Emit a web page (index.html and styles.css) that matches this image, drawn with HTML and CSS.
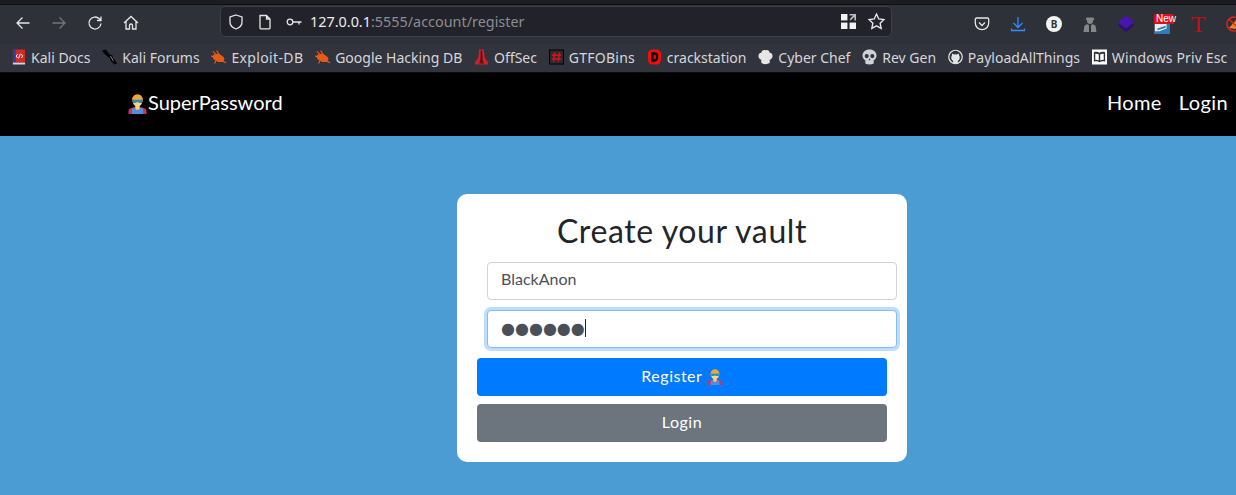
FILE: index.html
```html
<!DOCTYPE html>
<html lang="en">
<head>
<meta charset="utf-8">
<title>SuperPassword</title>
<link rel="stylesheet" href="styles.css">
</head>
<body>
<svg class="defs" width="0" height="0" aria-hidden="true">
  <symbol id="hero" viewBox="0 0 20 20">
    <path d="M1 20v-2.500c0-2 1.600-3.200 3.500-3.700l3-.8h5l3 .8c1.900.5 3.500 1.700 3.500 3.700V20z" fill="#d62f52"/>
    <path d="M4.500 14.800l2.500-1c.8 1.600 1.800 2.400 3 2.400s2.200-.8 3-2.400l2.500 1V20h-11z" fill="#4f8fe0"/>
    <path d="M7.800 11h4.400v3c0 1.100-.9 2-2.200 2s-2.200-.9-2.200-2z" fill="#fbd07a"/>
    <circle cx="10" cy="7.500" r="4.800" fill="#fdd583"/>
    <path d="M4.500 8C3.800 3.400 6.600.3 10 .3s6.200 3.100 5.500 7.700l-.9-2.700H5.400z" fill="#f7a427"/>
    <path d="M5.200 5.600h9.600v2.300c0 .6-.5 1-1 1h-1.700L10 8l-2.100.9H6.200c-.5 0-1-.4-1-1z" fill="#2d8ab5"/>
  </symbol>
</svg>

<header class="browser">
  <div class="strip"></div>
  <div class="toolbar">
    <div class="nav-buttons">
      <svg class="tool" viewBox="0 0 16 16"><path d="M14.500 8H2M7.500 2.500L2 8l5.500 5.500"/></svg>
      <svg class="tool dim" viewBox="0 0 16 16"><path d="M1.500 8H14M8.500 2.500L14 8l-5.500 5.500"/></svg>
      <svg class="tool" viewBox="0 0 16 16"><path d="M14 8.500A6 6 0 1 1 12.300 3.800L14 5.500M14 1.500v4h-4"/></svg>
      <svg class="tool" viewBox="0 0 16 16"><path d="M1 8l7-6.500L15 8M3 6.500V14h3.500v-3.500a1.500 1.500 0 0 1 3 0V14H13V6.500"/></svg>
    </div>
    <div class="urlbar">
      <svg class="tool" viewBox="0 0 16 16"><path d="M8 1l6 2v5c0 3.500-2.500 5.800-6 7-3.500-1.200-6-3.500-6-7V3z"/></svg>
      <svg class="tool" viewBox="0 0 16 16"><path d="M3 1.500h6.500L13 5v9a.8.8 0 0 1-.8.8H3.800A.8.8 0 0 1 3 14zM9.500 1.500V5H13"/></svg>
      <svg class="tool" viewBox="0 0 16 16"><circle cx="4" cy="8" r="2.800"/><path d="M7 8h8.500M13 8v2.500"/></svg>
      <span class="url"><span class="host">127.0.0.1</span>:5555/account/register</span>
      <span class="url-actions">
        <svg class="qr" viewBox="0 0 14 14"><rect x="0" y="0" width="6" height="6"/><rect x="0" y="8" width="6" height="6"/><rect x="8" y="8" width="6" height="6"/><path d="M8 0h6v6h-1.500V2.600L9 6 8 5l3.400-3.500H8z" opacity=".75"/></svg>
        <svg class="tool star" viewBox="0 0 16 16"><path d="M8 1l2.100 4.600 4.900.6-3.600 3.400 1 4.900L8 12.100 3.600 14.500l1-4.900L1 6.200l4.900-.6z"/></svg>
      </span>
    </div>
    <div class="extensions">
      <svg class="tool ext" viewBox="0 0 16 16"><path d="M2.500 2h11c.7 0 1.200.5 1.200 1.200V7A6.700 6.700 0 0 1 1.300 7V3.200C1.300 2.500 1.800 2 2.500 2z"/><path d="M5 6.500l3 3 3-3"/></svg>
      <svg class="tool ext download" viewBox="0 0 16 16"><path d="M8 1v10M3.500 7L8 11.500 12.500 7M1.500 12.500v2h13v-2"/></svg>
      <span class="ext badge-b">B</span>
      <svg class="ext" viewBox="0 0 16 16"><circle cx="8" cy="5" r="3" fill="#85868a"/><path d="M4.500 1.500h7l.8 2.500H3.700z" fill="#85868a"/><path d="M1.500 16l.8-5.500C2.500 9 4 8.500 6 8.200l1 1.300v6.500zM14.500 16l-.8-5.500C13.500 9 12 8.500 10 8.200L9 9.500V16z" fill="#85868a"/></svg>
      <svg class="ext" viewBox="0 0 16 16"><path d="M8 0l8 6-8 6-8-6z" fill="#4a12b8"/><path d="M1.500 8L8 13l6.500-5L16 9.500 8 16 0 9.500z" fill="#2d0d78"/></svg>
      <span class="ext new-ext">
        <span class="new-tag">New</span><svg class="new-icon" viewBox="0 0 16 11"><rect width="16" height="11" fill="#e8eef2"/><path d="M0 8h5l8-3V0h3v11H0z" fill="#2f7cb8"/><path d="M3 5l9-3v2L3 7z" fill="#2f7cb8"/></svg>
      </span>
      <span class="ext letter-t">T</span>
      <svg class="ext" viewBox="0 0 16 16"><circle cx="8" cy="8" r="7" fill="#3a2a2a" stroke="#d8281e" stroke-width="1.500"/><path d="M3 12l7-8 4 4-5 5z" fill="#e08a2c"/><path d="M3 3l10 10" stroke="#d8281e" stroke-width="1.500"/></svg>
    </div>
  </div>
  <nav class="bookmarks">
    <a class="bm"><svg viewBox="0 0 16 16"><rect x="2" y="0" width="13" height="14" fill="#d22b26"/><rect x="2" y="0" width="3" height="14" fill="#2a3f9a"/><rect x="2" y="14" width="13" height="2" fill="#d6d6d6"/><path d="M7 5L5.500 7 7 9M11 5l1.500 2L11 9M8 9.500L10 4.500" stroke="#fff" fill="none"/></svg>Kali Docs</a>
    <a class="bm"><svg viewBox="0 0 16 16"><path d="M0 1l4-1 4 5 3 1 1 3 3 4 1 2-3 1-3-3-2-4-3-2-3-3z" fill="#050505"/><path d="M9 7l3 5" stroke="#ccc" stroke-width=".7"/></svg>Kali Forums</a>
    <a class="bm wide-a"><svg viewBox="0 0 16 16"><ellipse cx="8" cy="9" rx="6.500" ry="4" transform="rotate(20 8 9)" fill="#ea5a17"/><path d="M2 2l5 5M6 1l3 5M0 7l4 1M11 12l5 2M5 12l-1 3" stroke="#ea5a17" stroke-width="1.200"/></svg>Exploit-DB</a>
    <a class="bm"><svg viewBox="0 0 16 16"><ellipse cx="8" cy="9" rx="6.500" ry="4" transform="rotate(20 8 9)" fill="#ea5a17"/><path d="M2 2l5 5M6 1l3 5M0 7l4 1M11 12l5 2M5 12l-1 3" stroke="#ea5a17" stroke-width="1.200"/></svg>Google Hacking DB</a>
    <a class="bm"><svg viewBox="0 0 16 16"><path d="M5.500 0h5l1 9 3.500 4.500V16H1v-2.500L4.500 9z" fill="#cf2027"/><path d="M7.200 1h1.600l.4 10 1.300 4H5.500l1.300-4z" fill="#5a1214"/></svg>OffSec</a>
    <a class="bm wide-b"><svg viewBox="0 0 16 16"><rect x=".5" y=".5" width="15" height="15" fill="#2a2b30" stroke="#000"/><path d="M6 3L5 13M11 3l-1 10M3 6h10M3 10h10" stroke="#c4161c" stroke-width="1.800"/></svg>GTFOBins</a>
    <a class="bm"><svg viewBox="0 0 16 16"><rect x="1" y="0" width="14" height="16" rx="5" fill="#f00d0d"/><path d="M4.500 3h3.500c3 0 4 2.200 4 5s-1 5-4 5H4.500z" fill="#000"/><path d="M7 5.500h1c1.300 0 1.500 1.200 1.500 2.500s-.2 2.500-1.500 2.500H7z" fill="#f00d0d"/></svg>crackstation</a>
    <a class="bm"><svg viewBox="0 0 16 16"><path d="M3.500 11C-.5 10-.5 3.500 3.500 3.500 4 .5 7 0 8 1c2-1 4 0 4.500 2.500 4 0 4 6.500 0 7.500v3.500c-3 1.500-6 1.500-9 0z" fill="#e6e6e6"/></svg>Cyber Chef</a>
    <a class="bm"><svg viewBox="0 0 16 16"><path d="M8 0c4.500 0 7.500 2.800 7.500 6.500 0 2.500-1.200 4-3 5V15c-3 1.300-6 1.300-9 0v-3.500c-1.800-1-3-2.500-3-5C.5 2.800 3.500 0 8 0z" fill="#cfd2d6"/><circle cx="5" cy="7" r="2.200" fill="#33353e"/><circle cx="11" cy="7" r="2.200" fill="#33353e"/><path d="M8 9l-1 2.500h2z" fill="#33353e"/></svg>Rev Gen</a>
    <a class="bm"><svg viewBox="0 0 16 16"><circle cx="8" cy="8" r="7.200" fill="none" stroke="#e4e4e4" stroke-width="1.300"/><path d="M5.500 15v-3c-1.500-.8-2-2-2-3.500 0-1 .3-1.600.7-2.100-.1-.6 0-1.300.2-1.900 1 0 1.500.4 2 .9a6 6 0 0 1 3.200 0c.5-.5 1-.9 2-.9.2.6.3 1.300.2 1.900.4.500.7 1.100.7 2.100 0 1.500-.5 2.700-2 3.500v3z" fill="#e4e4e4"/></svg>PayloadAllThings</a>
    <a class="bm wide-c"><svg viewBox="0 0 16 16"><rect width="16" height="16" fill="#fff"/><path d="M2 3c2-.7 4-.7 6 .5 2-1.200 4-1.200 6-.5v10c-2-.7-4-.7-6 .5-2-1.200-4-1.200-6-.5z" fill="#2e3038"/><path d="M3.500 4.500c1.300-.2 2.500 0 3.700.6v6.500c-1.200-.5-2.400-.7-3.700-.5zM12.500 4.500c-1.300-.2-2.500 0-3.700.6v6.500c1.200-.5 2.400-.7 3.700-.5z" fill="#fff"/></svg>Windows Priv Esc</a>
  </nav>
</header>

<div class="site-nav">
  <a class="brand"><svg class="emoji"><use href="#hero"/></svg>SuperPassword</a>
  <div class="site-links">
    <a>Home</a>
    <a>Login</a>
  </div>
</div>

<main class="stage">
  <form class="card">
    <h1>Create your vault</h1>
    <input class="field" type="text" value="BlackAnon" aria-label="Username">
    <div class="field focused" role="textbox" aria-label="Password"><span class="dots">●●●●●●</span><span class="caret"></span></div>
    <button class="btn primary" type="button">Register <svg class="emoji small"><use href="#hero"/></svg></button>
    <button class="btn secondary" type="button">Login</button>
  </form>
</main>
</body>
</html>
```
FILE: styles.css
```css
* { box-sizing: border-box; }
html, body { margin: 0; height: 100%; }
body {
  display: flex;
  flex-direction: column;
  overflow: hidden;
  font-family: "Lato", sans-serif;
  background: #4b9cd3;
}
.defs { position: absolute; }

/* Browser chrome */
.browser { background: #32343d; color: #e4e4e6; font-family: "Noto Sans", sans-serif; }
.strip { height: 5px; background: #1c1c21; border-bottom: 1px solid #0f0f12; }
.toolbar {
  height: 39px;
  display: flex;
  align-items: flex-start;
  background: #2f3139;
  overflow: hidden;
}
.tool { width: 16px; height: 16px; fill: none; stroke: #e6e6e8; stroke-width: 1.300; flex: none; }
.tool.dim { stroke: #74757b; }
.nav-buttons { display: flex; flex: none; gap: 20px; padding: 10px 0 0 15px; width: 220px; }
.urlbar {
  width: 672px;
  flex: none;
  height: 31px;
  margin-top: 1px;
  display: flex;
  align-items: center;
  gap: 13px;
  padding: 0 6px 0 7px;
  background: #22232a;
  border: 1px solid #3e4048;
  border-radius: 5px;
  font-size: 14.400px;
}
.url { color: #8b8c91; margin-left: -5px; }
.host { color: #ececee; }
.url-actions { margin-left: auto; display: flex; align-items: center; gap: 12px; }
.qr { width: 15px; height: 15px; fill: #f2f2f3; }
.star { width: 17px; height: 17px; }
.extensions {
  display: flex;
  flex: none;
  align-items: center;
  gap: 20px;
  padding: 5px 0 0 82px;
  height: 32px;
}
.ext { width: 16px; height: 16px; flex: none; }
.download { stroke: #2f8cff; }
.badge-b {
  border-radius: 50%;
  background: #f4f4f4; color: #33353e;
  font: 700 10px/16px "Noto Sans", sans-serif;
  text-align: center;
}
.new-ext { display: flex; flex-direction: column; align-self: flex-start; margin-top: 4px; height: 20px; }
.new-tag {
  width: 20px; height: 10px;
  background: #d8111c; color: #fff;
  font: 10px/10px "Liberation Sans", sans-serif;
  padding-left: 2px; border-radius: 2px 2px 0 0;
  flex: none;
}
.new-icon { width: 16px; height: 10px; flex: none; }
.letter-t {
  color: #c30f0f;
  font: 24px/16px "Liberation Serif", serif;
  text-align: center;
}
.bookmarks {
  height: 29px;
  display: flex;
  align-items: center;
  padding: 0 0 2px 11px;
  background: #32343d;
  border-bottom: 1px solid #0c0c0e;
  font-size: 14px;
  color: #d6d6da;
  white-space: nowrap;
  overflow: hidden;
}
.bm { display: flex; align-items: center; gap: 5px; margin-right: 11.800px; flex: none; }
.bm svg { width: 15px; height: 16px; flex: none; }
.wide-a { letter-spacing: .35px; }
.wide-b { letter-spacing: .25px; }
.wide-c { letter-spacing: .14px; }

/* Site nav */
.site-nav {
  height: 63px;
  flex: none;
  background: #000;
  color: #fff;
  display: flex;
  align-items: center;
  justify-content: space-between;
  padding: 0 8px 5px 127px;
  font-size: 20px;
}
.brand { display: flex; align-items: center; }
.emoji { width: 21px; height: 20px; flex: none; margin-top: 4px; }
.emoji.small { width: 16px; height: 16px; margin-top: 0; vertical-align: -3px; }
.site-links { display: flex; gap: 17px; letter-spacing: .4px; }

/* Register card */
.stage { flex: 1; display: flex; justify-content: center; padding: 58px 0 0 128px; }
.card {
  width: 450px;
  height: 268px;
  padding: 17px 20px 0;
  background: #fff;
  border-radius: 10px;
  display: flex;
  flex-direction: column;
  align-items: flex-start;
}
.card h1 {
  align-self: stretch;
  margin: 0 0 12px;
  height: 39px;
  text-align: center;
  font-size: 32px;
  font-weight: 400;
  line-height: 39px;
  letter-spacing: .6px;
  color: #212529;
}
.field {
  width: 410px;
  height: 38px;
  flex: none;
  margin: 0 0 10px 10px;
  padding: 0 12px 5px 13px;
  border: 1px solid #ced4da;
  border-radius: 4px;
  font: 16px "Lato", sans-serif;
  color: #495057;
  background: #fff;
  outline: none;
}
.focused {
  display: flex;
  align-items: center;
  padding-bottom: 2px;
  border-color: #80bdff;
  box-shadow: 0 0 0 3px rgba(0, 123, 255, .25);
}
.dots { font: 16px "DejaVu Sans", sans-serif; color: #495057; }
.caret { width: 1px; height: 18px; background: #212529; }
.btn {
  width: 410px;
  height: 38px;
  flex: none;
  margin: 0;
  padding: 0 0 4px;
  border: 0;
  border-radius: 4px;
  font: 16px "Lato", sans-serif;
  letter-spacing: .5px;
  color: #fff;
}
.primary { background: #007bff; margin-bottom: 8px; }
.secondary { background: #6c757d; }
```
